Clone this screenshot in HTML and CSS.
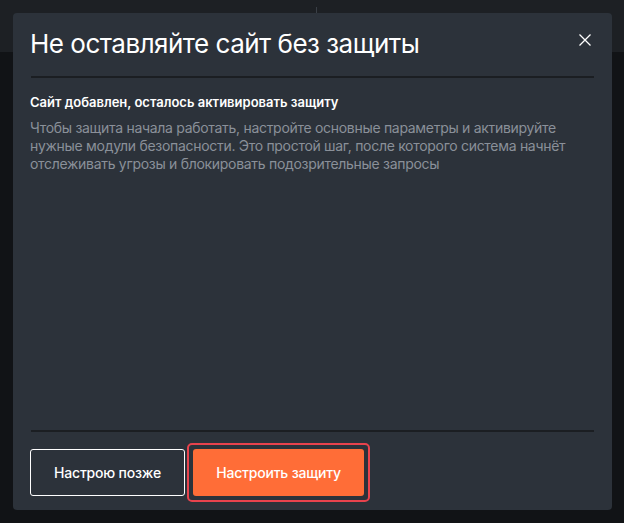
FILE: index.html
```html
<!DOCTYPE html>
<html lang="ru">
<head>
<meta charset="utf-8">
<link rel="stylesheet" href="styles.css">
</head>
<body>
<div class="backdrop">
  <div class="topbar"><span class="tick"></span></div>
  <div class="modal">
    <div class="modal-head">
      <h1 class="title">Не оставляйте сайт без защиты</h1>
      <button class="close" aria-label="Закрыть">
        <svg width="12" height="12" viewBox="0 0 12 12"><path d="M0.5 0.5L11.5 11.5M11.5 0.5L0.5 11.5" stroke="#ffffff" stroke-width="1.3" fill="none"/></svg>
      </button>
    </div>
    <div class="divider"></div>
    <div class="modal-body">
      <p class="subtitle">Сайт добавлен, осталось активировать защиту</p>
      <p class="text">Чтобы защита начала работать, настройте основные параметры и активируйте нужные модули безопасности. Это простой шаг, после которого система начнёт отслеживать угрозы и блокировать подозрительные запросы</p>
    </div>
    <div class="divider"></div>
    <div class="modal-foot">
      <button class="btn btn-outline">Настрою позже</button>
      <span class="focus-ring"><button class="btn btn-primary">Настроить защиту</button></span>
    </div>
  </div>
</div>
</body>
</html>
```
FILE: styles.css
```css
* { box-sizing: border-box; }
html, body { margin: 0; padding: 0; }
body {
  width: 624px;
  height: 523px;
  background: #111316;
  font-family: Inter, "Noto Sans", sans-serif;
  overflow: hidden;
}
.backdrop {
  position: relative;
  width: 624px;
  height: 523px;
}
.topbar {
  height: 52px;
  background: #1d2024;
  position: relative;
}
.tick {
  position: absolute;
  left: 316px;
  top: 7px;
  width: 1px;
  height: 7px;
  background: #3a3f46;
}
.modal {
  position: absolute;
  left: 13px;
  top: 13px;
  width: 599px;
  height: 497px;
  background: #2c323a;
  border-radius: 4px;
  display: flex;
  flex-direction: column;
  padding: 0 17px 0 17px;
}
.modal-head {
  display: flex;
  align-items: flex-start;
  justify-content: space-between;
  height: 63px;
  padding-top: 14px;
}
.title {
  margin: 0;
  font-size: 26px;
  font-weight: 400;
  color: #ffffff;
  letter-spacing: -0.5px;
  line-height: 34px;
}
.close {
  background: none;
  border: 0;
  padding: 0;
  margin: 7px 4px 0 0;
  width: 12px;
  height: 12px;
  display: flex;
}
.divider {
  height: 2px;
  background: #1b1e22;
  margin: 0 1px;
}
.modal-body {
  flex: 1;
  padding-top: 15px;
}
.subtitle {
  margin: 0 0 8px;
  font-size: 13px;
  font-weight: 600;
  color: #ffffff;
  letter-spacing: 0;
  line-height: 18px;
}
.text {
  margin: 0;
  font-size: 14px;
  color: #8a9099;
  line-height: 18px;
  letter-spacing: -0.3px;
}
.modal-foot {
  display: flex;
  align-items: center;
  gap: 2px;
  height: 78px;
  padding-top: 2px;
}
.btn {
  font-family: inherit;
  font-size: 14px;
  font-weight: 500;
  color: #ffffff;
  height: 47px;
  border-radius: 3px;
  letter-spacing: -0.2px;
}
.btn-outline {
  width: 155px;
  background: transparent;
  border: 1px solid #ffffff;
}
.focus-ring {
  display: inline-flex;
  padding: 4px;
  border: 2px solid #e8434d;
  border-radius: 5px;
}
.btn-primary {
  width: 171px;
  background: #ff6d37;
  border: 0;
}
```
